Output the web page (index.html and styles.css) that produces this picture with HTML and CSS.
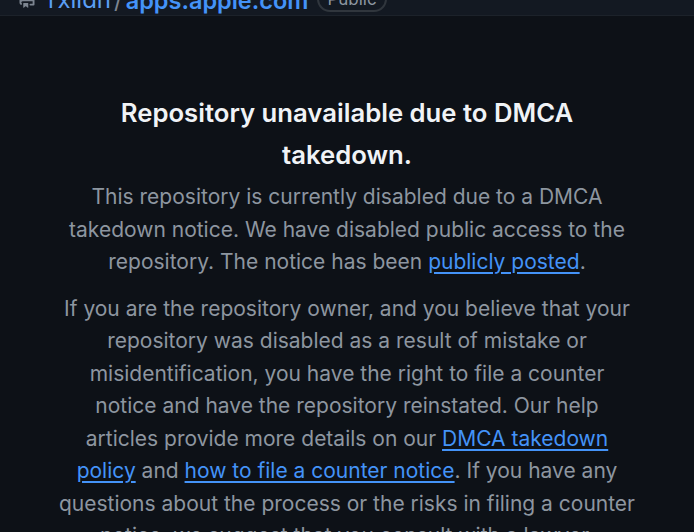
FILE: index.html
```html
<!DOCTYPE html>
<html lang="en">
<head>
<meta charset="utf-8">
<link rel="stylesheet" href="styles.css">
</head>
<body>
<header class="repo-bar">
  <svg class="repo-icon" viewBox="0 0 16 16" width="20" height="20" aria-hidden="true"><path fill="currentColor" d="M2 2.5A2.5 2.5 0 0 1 4.5 0h8.75a.75.75 0 0 1 .75.75v12.5a.75.75 0 0 1-.75.75h-2.5a.75.75 0 0 1 0-1.5h1.75v-2h-8a1 1 0 0 0-.714 1.7.75.75 0 1 1-1.072 1.05A2.495 2.495 0 0 1 2 11.5Zm10.5-1h-8a1 1 0 0 0-1 1v6.708A2.486 2.486 0 0 1 4.5 9h8ZM5 12.25a.25.25 0 0 1 .25-.25h3.5a.25.25 0 0 1 .25.25v3.25a.25.25 0 0 1-.4.2l-1.45-1.087a.249.249 0 0 0-.3 0L5.4 15.7a.25.25 0 0 1-.4-.2Z"/></svg>
  <span class="owner">rxiidn</span>
  <span class="sep">/</span>
  <span class="repo">apps.apple.com</span>
  <span class="badge">Public</span>
</header>
<main class="notice">
  <h1 class="title">Repository unavailable due to DMCA takedown.</h1>
  <p class="text">This repository is currently disabled due to a DMCA takedown notice. We have disabled public access to the repository. The notice has been <a href="#">publicly posted</a>.</p>
  <p class="text">If you are the repository owner, and you believe that your repository was disabled as a result of mistake or misidentification, you have the right to file a counter notice and have the repository reinstated. Our help articles provide more details on our <a href="#">DMCA takedown policy</a> and <a href="#">how to file a counter notice</a>. If you have any questions about the process or the risks in filing a counter notice, we suggest that you consult with a lawyer.</p>
</main>
</body>
</html>
```
FILE: styles.css
```css
html, body {
  margin: 0;
  padding: 0;
  background: #0d1117;
  height: 100%;
  overflow: hidden;
}
body {
  font-family: Inter, "Noto Sans", sans-serif;
  color: #8d96a0;
}
.repo-bar {
  height: 15px;
  background: #131922;
  border-bottom: 1px solid #1c222a;
  display: flex;
  align-items: flex-end;
  padding-left: 17px;
  overflow: hidden;
}
.repo-bar > * {
  flex: none;
}
.repo-icon {
  color: #7d8590;
  margin-bottom: 7px;
  margin-right: 11px;
}
.owner {
  color: #5b9ff5;
  font-size: 24px;
  line-height: 1;
  margin-bottom: 3px;
}
.sep {
  color: #7d8590;
  font-size: 24px;
  line-height: 1;
  margin: 0 3px 3px 3px;
}
.repo {
  color: #4493f8;
  font-size: 23.5px;
  font-weight: 600;
  line-height: 1;
  margin-bottom: 3px;
}
.badge {
  margin-left: 9px;
  margin-bottom: 3px;
  border: 2px solid #30363d;
  border-radius: 16px;
  padding: 0 8px;
  font-size: 17px;
  line-height: 22px;
  color: #8d96a0;
}
.notice {
  width: 578px;
  margin: 0 auto;
  padding-top: 76px;
  text-align: center;
}
.title {
  margin: 0 0 5px 0;
  color: #f0f3f6;
  font-size: 25.7px;
  font-weight: 600;
  line-height: 42px;
  padding: 0 40px;
}
.text {
  margin: 0 0 14px 0;
  font-size: 21px;
  line-height: 32.5px;
}
.text a {
  color: #4493f8;
  text-decoration: underline;
  text-underline-offset: 3px;
  text-decoration-thickness: 2px;
}
```
